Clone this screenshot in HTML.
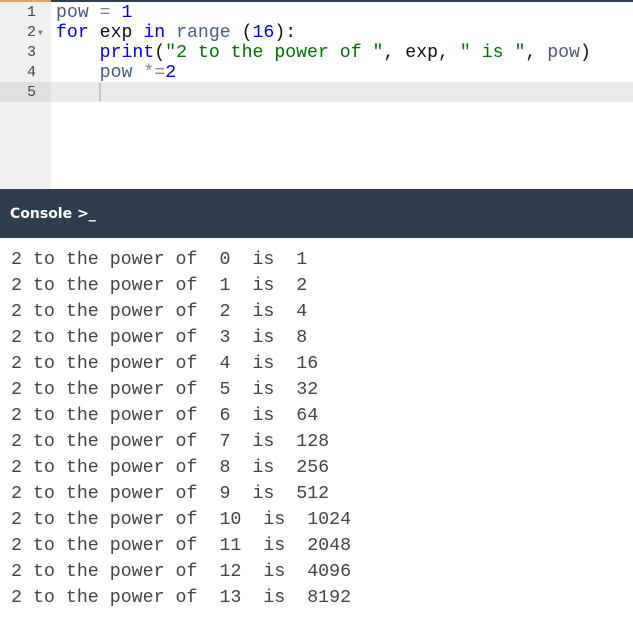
<!DOCTYPE html>
<html><head><style>
body{margin:0;width:633px;height:623px;background:#fff;overflow:hidden;position:relative;font-family:"Liberation Mono",monospace}
.topo{position:absolute;left:0;top:0;width:51px;height:2px;background:#d9a766}
.topd{position:absolute;left:51px;top:0;width:582px;height:2px;background:#2f3e4e}
.gut{position:absolute;left:0;top:2px;width:51px;height:187px;background:#f0f0f0}
.hl{position:absolute;left:0;top:82px;width:633px;height:20px;background:#eaeaea}
.hlg{position:absolute;left:0;top:82px;width:51px;height:20px;background:#e0e0e0}
.ln{position:absolute;left:0;width:36px;text-align:right;font-size:15px;color:#444;font-family:"Liberation Mono",monospace}
.code{position:absolute;left:56px;top:3px;font-size:18.2px;line-height:20px;white-space:pre;color:#111}
.v{color:#4a5a80}.k{color:#0000e0}.s{color:#007000}.n{color:#0000d0}.o{color:#888}
.cur{position:absolute;left:99px;top:83px;width:2px;height:18px;background:#c8c8c8}
.con{position:absolute;left:0;top:189px;width:633px;height:49px;background:#2e3e4f;color:#fff;font:bold 14px "DejaVu Sans",sans-serif;line-height:50px;padding-left:10px;box-sizing:border-box}
.out{position:absolute;left:11px;top:247px;font-size:18.3px;line-height:26px;white-space:pre;color:#444}
.arr{position:absolute;left:38px;top:29px;font-size:8px;color:#777}
</style></head><body>
<div class="topo"></div><div class="topd"></div>
<div class="gut"></div>
<div class="hl"></div><div class="hlg"></div>
<div class="ln" style="top:4px">1</div>
<div class="ln" style="top:24px">2</div>
<div class="ln" style="top:44px">3</div>
<div class="ln" style="top:64px">4</div>
<div class="ln" style="top:84px">5</div>
<div class="arr">▼</div>
<div class="code"><span class="v">pow</span> <span class="o">=</span> <span class="n">1</span>
<span class="k">for</span> exp <span class="k">in</span> <span class="v">range</span> (<span class="n">16</span>):
    <span class="k">print</span>(<span class="s">"2 to the power of "</span>, exp, <span class="s">" is "</span>, <span class="v">pow</span>)
    <span class="v">pow</span> <span class="o">*=</span><span class="n">2</span></div>
<div class="cur"></div>
<div class="con">Console &gt;_</div>
<div class="out">2 to the power of  0  is  1
2 to the power of  1  is  2
2 to the power of  2  is  4
2 to the power of  3  is  8
2 to the power of  4  is  16
2 to the power of  5  is  32
2 to the power of  6  is  64
2 to the power of  7  is  128
2 to the power of  8  is  256
2 to the power of  9  is  512
2 to the power of  10  is  1024
2 to the power of  11  is  2048
2 to the power of  12  is  4096
2 to the power of  13  is  8192</div>
</body></html>
